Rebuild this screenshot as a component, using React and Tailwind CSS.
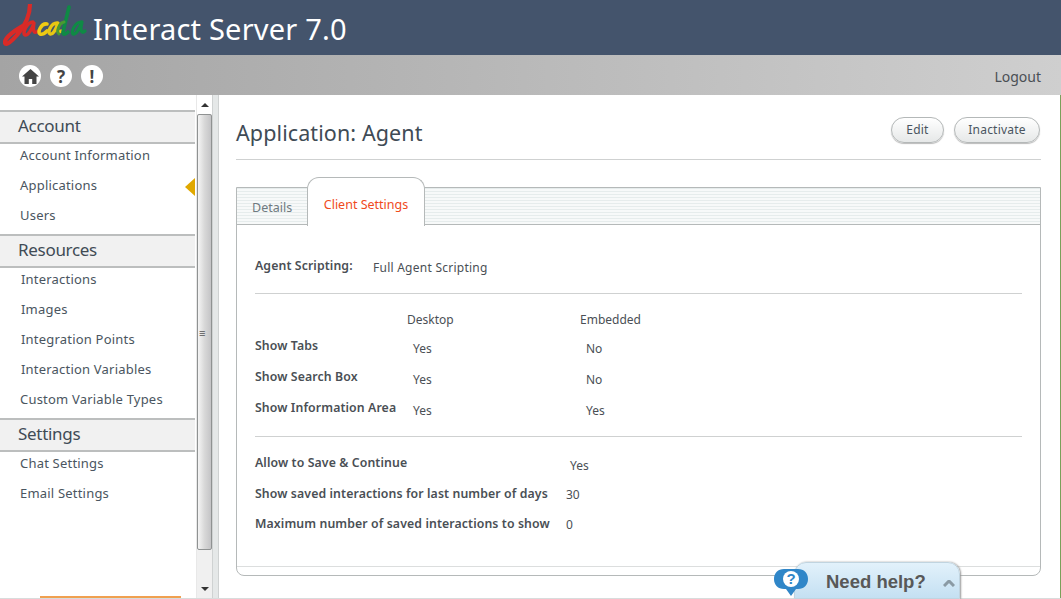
const F = "font-['Noto_Sans',sans-serif]";

function Section({ title, items, last, indent }) {
  return (
    <div>
      <div className="h-[34px] bg-[#f1f1f1] border-y-2 border-[#bcbebe] pl-[18px] text-[17px] tracking-[-0.3px] leading-[28px] text-[#404b55]">{title}</div>
      <div className={last ? "" : "mb-2"}>
        {items.map((t, i) => (
          <div key={t} className={`h-[22px] leading-[22px] ${indent && i < 4 ? "pl-[21px]" : "pl-5"} text-[13px] tracking-[0.2px] text-[#4a5560] ${i < items.length - 1 ? "mb-2" : ""}`}>{t}</div>
        ))}
      </div>
    </div>
  );
}

function Round({ children }) {
  return <div className="w-[22px] h-[22px] rounded-full bg-white flex items-center justify-center text-[#444] font-bold text-[17px] leading-none">{children}</div>;
}

function Btn({ children, w }) {
  return <div className={`${w} h-[26px] rounded-[13px] border border-[#b4b8b8] bg-gradient-to-b from-white to-[#e6e8e8] shadow-[0_1px_1px_#bbb] flex items-center justify-center text-[12px] text-[#4a5560] tracking-[0.2px]`}>{children}</div>;
}

function Logo() {
  return (
    <svg width="86" height="50" viewBox="0 0 86 50" className="shrink-0 mt-1" fill="none" strokeLinecap="round" strokeLinejoin="round">
      <path d="M27 0 C27 12 22 22 14 31 C9 37 3 42 2 39 C1 34 12 26 23 20" stroke="#d92a27" strokeWidth="4.2" />
      <path d="M30 18 C24 18 19 29 22 31 C25 32 29 25 31 19 C30 25 30 31 35 27" stroke="#d92a27" strokeWidth="3.4" />
      <path d="M44 20 C38 19 34 29 37 30 C39 31 42 29 44 27" stroke="#efcb13" strokeWidth="3.6" />
      <path d="M54 19 C48 19 44 29 47 30 C50 31 53 25 55 19 C54 25 54 30 58 27" stroke="#e8c713" strokeWidth="3.4" />
      <path d="M66 3 C64 11 62 20 60 28 C60 31 62 31 65 28" stroke="#0f8a45" strokeWidth="3.6" />
      <path d="M61 18 C56 19 53 28 56 30" stroke="#4a9a30" strokeWidth="3" />
      <path d="M78 18 C72 18 68 28 70 30 C73 31 76 25 79 18 C77 25 78 31 82 27" stroke="#0f8a45" strokeWidth="3.2" />
    </svg>
  );
}

function Scrollbar() {
  return (
    <div className="w-[24px] pl-px shrink-0 flex">
      <div className="w-[16px] flex flex-col bg-[#f0f0f0] border-l border-[#e8e8e8]">
        <div className="h-[19px] bg-white flex items-center justify-center">
          <div className="w-0 h-0 border-x-[4px] border-x-transparent border-b-[4px] border-b-[#333]" />
        </div>
        <div className="h-[436px] flex items-center justify-start pl-[1px] rounded-[2px] border border-[#8f9292] bg-gradient-to-r from-[#f5f5f5] via-[#d8d8d8] to-[#c4c4c6] text-[11px] text-[#555] leading-none">≡</div>
        <div className="flex-1 flex items-end justify-center pb-2">
          <div className="w-0 h-0 border-x-[4px] border-x-transparent border-t-[4px] border-t-[#333]" />
        </div>
      </div>
      <div className="w-[7px] bg-[#e5e8e8] border-x border-[#cfd2d2]" />
    </div>
  );
}

const Label = ({ children, className = "" }) => <div className={`text-[12.3px] font-semibold text-[#4a4f55] tracking-[0.1px] ${className}`}>{children}</div>;
const Val = ({ children, className = "" }) => <div className={`text-[12px] text-[#4a4f55] ${className}`}>{children}</div>;

export default function App() {
  const rows = [
    ["Show Tabs", "Yes", "No"],
    ["Show Search Box", "Yes", "No"],
    ["Show Information Area", "Yes", "Yes"],
  ];
  const more = [
    ["Allow to Save & Continue", "Yes", "w-[315px]", "h-[31px]", "mt-[3px]"],
    ["Show saved interactions for last number of days", "30", "w-[311px]", "h-[30px]", "mt-[1px]"],
    ["Maximum number of saved interactions to show", "0", "w-[311px]", "h-[30px]", "mt-[1px]"],
  ];
  return (
    <div className={`${F} relative w-[1061px] h-[599px] overflow-hidden bg-white flex flex-col`}>
      <header className="h-[55px] bg-[#44546c] flex items-start pl-[3px] shrink-0">
        <Logo />
        <div className="ml-1 mt-[7px] text-[29px] leading-[44px] text-white tracking-[0.2px]">Interact Server 7.0</div>
      </header>
      <div className="h-[40px] pt-[2px] shrink-0 bg-gradient-to-r from-[#a4a4a4] to-[#cfcfcf] flex items-center pl-[19px] pr-5 gap-[9px]">
        <Round>
          <svg width="17" height="15" viewBox="0 0 17 15" fill="#444"><path d="M8.5 0 L17 7.5 L14.5 7.5 L14.5 15 L10.2 15 L10.2 10 L6.8 10 L6.8 15 L2.5 15 L2.5 7.5 L0 7.5 Z" /></svg>
        </Round>
        <Round>?</Round>
        <Round>!</Round>
        <div className="ml-auto text-[14px] text-[#4a4f55]">Logout</div>
      </div>
      <div className="flex flex-1 min-h-0">
        <aside className="relative w-[195px] shrink-0 pt-[15px]">
          <Section title="Account" items={["Account Information", "Applications", "Users"]} />
          <Section title="Resources" items={["Interactions", "Images", "Integration Points", "Interaction Variables", "Custom Variable Types"]} indent />
          <Section title="Settings" items={["Chat Settings", "Email Settings"]} last />
          <div className="absolute right-0 top-[83px] w-0 h-0 border-y-[9px] border-y-transparent border-r-[10px] border-r-[#e0a800]" />
          <div className="absolute bottom-px left-10 w-[141px] h-[2px] bg-[#f0a050]" />
        </aside>
        <Scrollbar />
        <main className="flex-1 min-w-0 pl-[17px] pr-[19px] flex flex-col border-r border-[#7aa05a]">
          <div className="h-[65px] border-b border-[#cfd1d1] flex items-start justify-between pr-px">
            <h1 className="pt-[22px] text-[21.5px] text-[#404b55] tracking-[0.1px]">Application: Agent</h1>
            <div className="flex gap-[10px] mt-[22px]">
              <Btn w="w-[53px]">Edit</Btn>
              <Btn w="w-[86px]">Inactivate</Btn>
            </div>
          </div>
          <div className="mt-[27px] h-[389px] border border-[#b5b9b9] rounded-b-[8px] flex flex-col">
            <div className="relative h-[37px] shrink-0 border-b border-[#b5b9b9] bg-[repeating-linear-gradient(0deg,#f7f9f9_0px,#f7f9f9_2px,#e6ecec_2px,#e6ecec_3px)]">
              <div className="absolute left-[15px] top-[11px] text-[12.5px] text-[#6f7a80]">Details</div>
              <div className="absolute left-[70px] top-[-11px] w-[118px] h-[49px] bg-white border-x border-t border-[#b5b9b9] rounded-t-[12px] flex justify-center pt-[18px] text-[12.5px] text-[#f04a1c]">Client Settings</div>
            </div>
            <div className="flex-1 px-[18px] flex flex-col">
              <div className="flex items-start h-[69px] border-b border-[#cfd1d1] pt-[31px]">
                <Label className="w-[118px] leading-[20px]">Agent Scripting:</Label>
                <Val className="leading-[20px] mt-[2px] tracking-[0.25px]">Full Agent Scripting</Val>
              </div>
              <div className="h-[143px] border-b border-[#cfd1d1] pt-[16px] grid grid-cols-[152px_173px_1fr] auto-rows-[31px] content-start">
                <div />
                <Val className="leading-[20px]">Desktop</Val>
                <Val className="leading-[20px]">Embedded</Val>
                {rows.map(([a, b, c]) => [
                  <Label key={a} className="leading-[20px] mt-[-5px]">{a}</Label>,
                  <Val key={a + "b"} className="pl-[6px] leading-[20px] mt-[-2px]">{b}</Val>,
                  <Val key={a + "c"} className="pl-[6px] leading-[20px] mt-[-2px]">{c}</Val>,
                ])}
              </div>
              <div className="pt-[16px]">
                {more.map(([a, b, w, h, m]) => (
                  <div key={a} className={`flex ${h}`}>
                    <Label className={`${w} leading-[20px]`}>{a}</Label>
                    <Val className={`leading-[20px] ${m}`}>{b}</Val>
                  </div>
                ))}
              </div>
            </div>
            <div className="h-[9px] border-t border-[#dcdede] shrink-0" />
          </div>
        </main>
      </div>
      <div className="absolute left-0 right-0 bottom-0 h-px bg-[#d8dcdc]" />
      <div className="absolute left-[794px] top-[562px] w-[166px] h-[37px] rounded-t-[12px] border border-[#c0d4e0] bg-gradient-to-b from-[#e2f1fb] to-[#c4e0f2] shadow-[1px_0_2px_#999] flex items-center">
        <div className="ml-[31px] mt-[2px] font-['Liberation_Sans',sans-serif] font-bold text-[18.5px] text-[#585858]">Need help?</div>
        <svg width="12" height="7" viewBox="0 0 12 7" className="ml-[17px] mt-[5px]"><path d="M1 6 L6 1 L11 6" stroke="#8a9aa4" strokeWidth="3" fill="none" /></svg>
      </div>
      <div className="absolute left-[774px] top-[569px] w-[34px] h-[28px]">
        <svg width="34" height="28" viewBox="0 0 34 28">
          <path d="M10 0 H24 C30 0 34 4 34 10 C34 16 30 20 24 20 H22 L17 27 L12 20 H10 C4 20 0 16 0 10 C0 4 4 0 10 0 Z" fill="#2f86c8" />
          <circle cx="17" cy="10" r="8" fill="#fff" />
        </svg>
        <div className="absolute left-[11px] top-[0px] w-3 text-center font-['Liberation_Sans',sans-serif] font-bold text-[15px] leading-[20px] text-[#2f86c8]">?</div>
      </div>
    </div>
  );
}
